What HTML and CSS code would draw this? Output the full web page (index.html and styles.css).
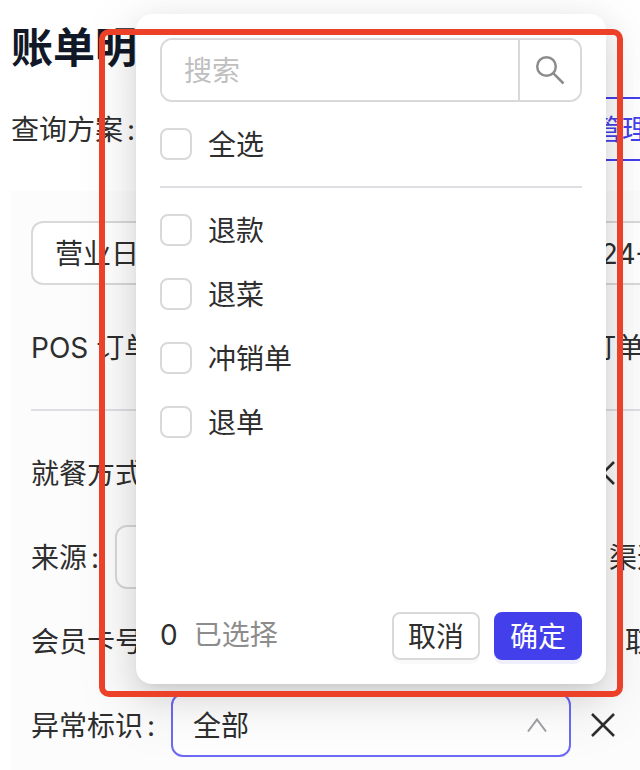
FILE: index.html
```
<!DOCTYPE html>
<html lang="zh-CN">
<head>
  <meta charset="UTF-8">
  <meta name="viewport" content="width=device-width, initial-scale=1.0">
  <title>账单明细</title>
  <link rel="stylesheet" href="styles.css">
</head>
<body>
  <main class="page">
    <h1>账单明细</h1>

    <div class="scheme-row">
      <span class="label">查询方案<span class="colon">:</span></span>
      <button type="button" class="manage-btn">管理</button>
    </div>

    <form class="filter-panel">
      <div class="row">
        <button type="button" class="date-range">
          <span>营业日</span>
          <span class="date-value">2024-</span>
        </button>
      </div>

      <div class="row">
        <label class="label" for="posOrder">POS 订单号<span class="colon">:</span></label>
        <input type="text" id="posOrder" class="field">
        <span class="tail tail-order">订单</span>
      </div>

      <hr>

      <div class="row">
        <label class="label" for="dining">就餐方式<span class="colon">:</span></label>
        <input type="text" id="dining" class="field">
        <button type="button" class="remove-btn" aria-label="移除就餐方式">
          <svg viewBox="0 0 24 24"><path d="M1 1L23 23M23 1L1 23"/></svg>
        </button>
      </div>

      <div class="row">
        <label class="label" for="source">来源<span class="colon">:</span></label>
        <input type="text" id="source" class="field">
        <span class="tail tail-channel">渠道</span>
      </div>

      <div class="row">
        <label class="label" for="cardNo">会员卡号<span class="colon">:</span></label>
        <input type="text" id="cardNo" class="field">
        <span class="tail tail-pickup">取</span>
      </div>

      <div class="row">
        <label class="label" for="abnormal">异常标识<span class="colon">:</span></label>
        <div class="select-wrap">
          <select id="abnormal">
            <option>全部</option>
          </select>
          <svg class="chevron" viewBox="0 0 20 14"><path d="M1 13.500L10 1.500L19 13.500"/></svg>
        </div>
        <button type="button" class="remove-btn" aria-label="移除异常标识">
          <svg viewBox="0 0 24 24"><path d="M1 1L23 23M23 1L1 23"/></svg>
        </button>
      </div>
    </form>

    <section class="dropdown">
      <div class="search">
        <input type="text" placeholder="搜索" aria-label="搜索">
        <button type="button" aria-label="搜索">
          <svg viewBox="0 0 30 30"><circle cx="11.500" cy="11.500" r="9.300"/><path d="M18.200 18.200L28.500 28.500"/></svg>
        </button>
      </div>

      <label class="option"><input type="checkbox"><span>全选</span></label>
      <hr>
      <div class="option-list">
        <label class="option"><input type="checkbox"><span>退款</span></label>
        <label class="option"><input type="checkbox"><span>退菜</span></label>
        <label class="option"><input type="checkbox"><span>冲销单</span></label>
        <label class="option"><input type="checkbox"><span>退单</span></label>
      </div>

      <div class="dropdown-footer">
        <span class="count">0</span>
        <span class="count-text">已选择</span>
        <button type="button" class="btn">取消</button>
        <button type="button" class="btn btn-primary">确定</button>
      </div>
    </section>

    <div class="highlight"></div>
  </main>
</body>
</html>
```
FILE: styles.css
```
* {
  box-sizing: border-box;
  margin: 0;
  padding: 0;
}

body {
  background-color: #fff;
  color: #2e2e2e;
  font-family: Inter, "Noto Sans CJK SC", sans-serif;
  font-size: 28px;
  font-weight: 390;
  line-height: 40px;
}

input,
select,
button {
  font: inherit;
  color: inherit;
}

button {
  cursor: pointer;
}

hr {
  border: none;
  border-top: 2px solid #dedfe3;
}

.page {
  position: relative;
  height: 100vh;
  min-height: 770px;
  padding: 18px 0 0 11px;
  overflow: hidden;
}

h1 {
  color: #111827;
  font-size: 42px;
  font-weight: 700;
  line-height: 60px;
}

.scheme-row,
.row {
  display: flex;
  align-items: center;
  height: 64px;
  white-space: nowrap;
}

.scheme-row {
  justify-content: space-between;
  margin: 19px 0 30px;
}

.label,
.tail,
.option span {
  padding-top: 2px;
}

.colon {
  margin: 0 16px 0 4px;
}

.manage-btn {
  width: 80px;
  height: 64px;
  padding: 2px 0 0 32px;
  border: 2px solid #4340eb;
  border-right: none;
  border-radius: 12px 0 0 12px;
  background-color: #fff;
  color: #4340eb;
  overflow: hidden;
}

.filter-panel {
  display: flex;
  flex-direction: column;
  gap: 20px;
  padding: 30px 0 20px 20px;
  background-color: #fcfcfc;
}

.filter-panel > .row:first-child {
  margin-bottom: 10px;
}

.filter-panel hr {
  margin: 10px 0;
}

.date-range {
  display: flex;
  flex: 1;
  align-items: center;
  justify-content: space-between;
  height: 64px;
  padding: 2px 0 0 22px;
  border: 2px solid #d9d9d9;
  border-right: none;
  border-radius: 12px 0 0 12px;
  background-color: #fff;
}

.date-value {
  width: 74px;
  text-align: left;
}

.field,
select {
  flex: 1;
  width: 100%;
  min-width: 0;
  height: 64px;
  padding: 2px 20px 0;
  border: 2px solid #d9d9d9;
  border-radius: 12px;
  background-color: #fff;
  outline: none;
}

.select-wrap {
  position: relative;
  flex: 1;
}

select {
  display: block;
  appearance: none;
  border-color: #6e6af5;
}

.chevron {
  position: absolute;
  top: 25px;
  right: 24px;
  width: 20px;
  height: 14px;
  fill: none;
  stroke: #a0a0a6;
  stroke-width: 2;
}

.remove-btn {
  width: 24px;
  height: 24px;
  margin: 0 25px 0 20px;
  border: none;
  background: none;
}

.remove-btn svg {
  display: block;
  fill: none;
  stroke: #2e2e2e;
  stroke-width: 2.5;
}

.tail {
  margin-left: 20px;
  overflow: hidden;
}

.tail-order {
  width: 52px;
}

.tail-channel {
  width: 31px;
}

.tail-pickup {
  width: 15px;
}

.dropdown {
  position: absolute;
  top: 14px;
  left: 136px;
  right: 34px;
  display: flex;
  flex-direction: column;
  height: 670px;
  padding: 24px;
  border-radius: 16px;
  background-color: #fff;
  box-shadow: 0 12px 32px rgba(0, 0, 0, 0.12), 0 6px 12px -8px rgba(0, 0, 0, 0.12), 0 18px 56px 16px rgba(0, 0, 0, 0.06);
}

.search {
  display: flex;
  height: 64px;
  margin-bottom: 22px;
  border: 2px solid #d9d9d9;
  border-radius: 12px;
  overflow: hidden;
}

.search input {
  flex: 1;
  min-width: 0;
  padding: 2px 22px 0;
  border: none;
  outline: none;
}

.search input::placeholder {
  color: #bfbfbf;
}

.search button {
  display: flex;
  align-items: center;
  justify-content: center;
  width: 62px;
  border: none;
  border-left: 2px solid #d9d9d9;
  background-color: #fff;
}

.search svg {
  width: 30px;
  height: 30px;
  fill: none;
  stroke: #8c8c8c;
  stroke-width: 2.5;
}

.option {
  display: flex;
  align-items: center;
  gap: 16px;
  height: 40px;
}

.option input {
  appearance: none;
  width: 32px;
  height: 32px;
  border: 2px solid #d9d9d9;
  border-radius: 8px;
  background-color: #fff;
}

.option input:checked {
  border-color: #4340eb;
  background-color: #4340eb;
}

.dropdown hr {
  margin: 22px 0;
}

.option-list {
  display: flex;
  flex-direction: column;
  gap: 24px;
}

.dropdown-footer {
  display: flex;
  align-items: center;
  margin-top: auto;
}

.count,
.count-text {
  padding-bottom: 2px;
}

.count-text {
  margin: 0 auto 0 16px;
  color: #8c8c8c;
}

.btn {
  width: 88px;
  height: 48px;
  padding-top: 2px;
  border: 2px solid #d9d9d9;
  border-radius: 8px;
  background-color: #fff;
  box-shadow: 0 4px 0 rgba(0, 0, 0, 0.02);
}

.btn-primary {
  margin-left: 14px;
  border-color: #4340eb;
  background-color: #4340eb;
  color: #fff;
  box-shadow: 0 4px 0 rgba(67, 64, 235, 0.08);
}

.highlight {
  position: absolute;
  top: 29px;
  left: 99px;
  right: 17px;
  height: 668px;
  border: 6px solid #ec4128;
  border-radius: 10px;
  pointer-events: none;
}
```
